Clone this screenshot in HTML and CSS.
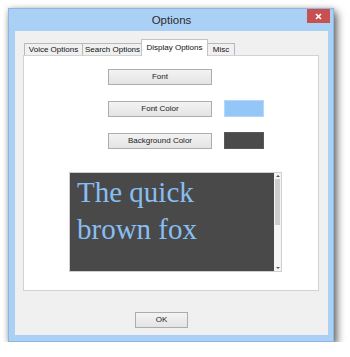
FILE: index.html
```html
<!DOCTYPE html>
<html lang="en">
<head>
  <meta charset="UTF-8">
  <title>Options</title>
  <link rel="stylesheet" href="styles.css">
</head>
<body>
  <div class="window">
    <div class="titlebar">
      <span></span>
      <div class="title">Options</div>
      <div class="close">
        <svg width="7" height="7" viewBox="0 0 7 7"><path d="M1 1L6 6M6 1L1 6" stroke="#fff" stroke-width="1.6"/></svg>
      </div>
    </div>
    <div class="client">
      <div class="tabs">
        <div class="tab voice">Voice Options</div>
        <div class="tab search">Search Options</div>
        <div class="tab display active">Display Options</div>
        <div class="tab misc">Misc</div>
      </div>
      <div class="panel">
        <div class="rows">
          <div class="row">
            <button class="btn wide">Font</button>
          </div>
          <div class="row">
            <button class="btn wide">Font Color</button>
            <div class="swatch light"></div>
          </div>
          <div class="row">
            <button class="btn wide">Background Color</button>
            <div class="swatch dark"></div>
          </div>
        </div>
        <div class="preview">
          <div class="preview-text">The quick<br>brown fox</div>
          <div class="scrollbar">
            <div class="arrow up"></div>
            <div class="thumb"></div>
            <div class="track"></div>
            <div class="arrow down"></div>
          </div>
        </div>
      </div>
      <div class="footer">
        <button class="btn ok">OK</button>
      </div>
    </div>
  </div>
</body>
</html>
```

FILE: styles.css
```css
* { box-sizing: border-box; }
body {margin: 0;background: #fff;font-family: 'Liberation Sans', Arial, sans-serif;}
.window {margin: 8px 0 0 8px;width: 326px;height: 334px;background: #abd0f6;border: 1px solid #8fb6de;padding: 0 5px 6px 6px;display: flex;flex-direction: column;box-shadow: 3px 4px 8px rgba(0,0,0,0.6), 0 0 5px rgba(0,0,0,0.15);}
.titlebar {height: 22px;display: grid;grid-template-columns: 1fr auto 1fr;align-items: center;}
.title {font-size: 11.5px;color: #2b2b2b;}
.close {justify-self: end;align-self: start;width: 23px;height: 14px;margin-right: -2px;background: #c75050;display: flex;align-items: center;justify-content: center;}
.close svg {display: block;}
.client {flex: 1;background: #f0f0f0;padding: 8px 9px 0 8px;display: flex;flex-direction: column;}
.tabs {display: flex;align-items: flex-end;height: 17px;padding-left: 1px;position: relative;z-index: 1;}
.tab {height: 12px;margin-bottom: 1px;border: 1px solid #b9b9b9;border-bottom: 0;margin-left: -1px;background: #f0f0f0;font-size: 8px;line-height: 11px;color: #111;white-space: nowrap;text-align: center;}
.tab:first-child {margin-left: 0;}
.tab.voice {width: 59px;}
.tab.search {width: 61px;}
.tab.display {width: 67px;}
.tab.misc {width: 28px;}
.tab.active {height: 17px;margin: 0 -2px 0 -2px;padding-top: 2px;background: #fff;border-color: #c4c4c4;position: relative;}
.tab.active + .tab {margin-left: 1px;}
.panel {margin-top: -1px;height: 236px;background: #fff;border: 1px solid #d2d2d2;padding: 12px 0 0 84px;}
.rows {display: flex;flex-direction: column;gap: 15px;}
.row {display: flex;align-items: center;gap: 12px;height: 17px;}
.btn {height: 16px;padding: 0;border: 1px solid #acacac;background: linear-gradient(#f3f3f3, #e4e4e4);font-family: 'Liberation Sans', Arial, sans-serif;font-size: 8px;color: #1a1a1a;}
.wide {width: 104px;}
.swatch {width: 40px;height: 17px;}
.swatch.light {background: #94c6f8;border: 1px solid #b4d7fa;}
.swatch.dark {background: #4a4a4a;border: 1px solid #5a5a5a;}
.preview {margin: 23px 0 0 -39px;width: 213px;height: 100px;border: 1px solid #cfcfcf;display: flex;}
.preview-text {flex: 1;background: #494949;padding: 1px 0 0 7px;font-family: 'Liberation Serif', 'Times New Roman', serif;font-size: 29px;line-height: 37px;color: #88bef2;}
.scrollbar {width: 7px;background: #f4f4f4;display: flex;flex-direction: column;align-items: center;}
.arrow {width: 0;height: 0;border-left: 2px solid transparent;border-right: 2px solid transparent;margin: 2px 0;}
.arrow.up {border-bottom: 2px solid #555;}
.arrow.down {border-top: 2px solid #555;}
.thumb {width: 5px;height: 46px;background: #cdcdcd;}
.track {flex: 1;}
.footer {padding: 17px 0 0 112px;}
.ok {width: 53px;}
```
